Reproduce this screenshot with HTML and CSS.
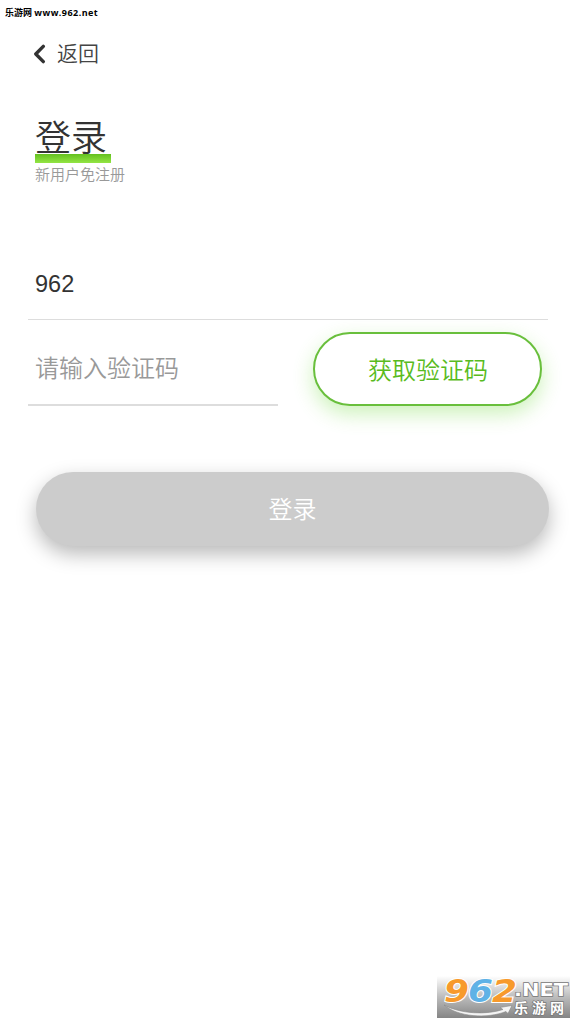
FILE: index.html
```html
<!DOCTYPE html>
<html lang="zh-CN">
<head>
<meta charset="utf-8">
<title>登录</title>
<link rel="stylesheet" href="styles.css">
</head>
<body>
<main class="page">
  <div class="site-mark">乐游网 <span class="site-url">www.962.net</span></div>
  <header class="nav">
    <svg class="nav-icon" viewBox="0 0 12 20"><path d="M9.3 2.4 1.8 10 9.3 17.6"/></svg>
    <span class="nav-label">返回</span>
  </header>
  <section class="heading">
    <h1 class="title">登录</h1>
    <div class="title-bar"></div>
    <p class="subtitle">新用户免注册</p>
  </section>
  <form class="form">
    <div class="phone">962</div>
    <div class="code-row">
      <div class="code">请输入验证码</div>
      <button class="get-code" type="button">获取验证码</button>
    </div>
    <button class="submit" type="button">登录</button>
  </form>
  <svg class="watermark" viewBox="0 0 133 42">
    <defs>
      <linearGradient id="fade" x1="0" y1="0" x2="0" y2="1">
        <stop offset="0" stop-color="#fff"/>
        <stop offset=".5" stop-color="#bcbcbc"/>
        <stop offset="1" stop-color="#858585"/>
      </linearGradient>
    </defs>
    <rect width="133" height="42" fill="url(#fade)"/>
    <g class="logo-num">
      <text x="7" y="25.5" textLength="25" lengthAdjust="spacingAndGlyphs" fill="#f79a2c">9</text>
      <text x="31" y="25.5" textLength="25" lengthAdjust="spacingAndGlyphs" fill="#5fb2e6">6</text>
      <text x="55" y="25.5" textLength="25" lengthAdjust="spacingAndGlyphs" fill="#f79a2c">2</text>
    </g>
    <path class="logo-smile" d="M7 29C23 38 50 39 66 33.5L63 31.5 75 29.5 71 37.5 69 35.5C50 43 21 41 7 29Z"/>
    <text class="logo-net" x="77" y="20" textLength="54" lengthAdjust="spacingAndGlyphs">.NET</text>
    <text class="logo-cn" x="77" y="37" textLength="50">乐游网</text>
  </svg>
</main>
</body>
</html>
```
FILE: styles.css
```css
* { box-sizing: border-box; }
body {
  margin: 0;
  background: #fff;
  font-family: "Liberation Sans", "Noto Sans CJK SC", sans-serif;
  color: #333;
}
.page {
  position: relative;
  height: 1024px;
  overflow: hidden;
}
.site-mark {
  height: 26px;
  padding-left: 5px;
  font: bold 9px/26px "Open Sans", "Noto Sans CJK SC", sans-serif;
  color: #000;
  white-space: nowrap;
}
.site-url { letter-spacing: .46px; }
.nav {
  display: flex;
  align-items: center;
  gap: 11px;
  height: 56px;
  padding-left: 34px;
}
.nav-icon {
  width: 12px;
  height: 20px;
  fill: none;
  stroke: #333;
  stroke-width: 3.4;
  stroke-linecap: round;
  stroke-linejoin: round;
}
.nav-label {
  padding-bottom: 4px;
  font: 350 21px/30px "Noto Sans CJK SC", sans-serif;
  color: #444;
}
.heading { padding: 32px 0 0 35px; }
.title {
  height: 40px;
  margin: 0;
  font: 350 36px/42px "Noto Sans CJK SC", sans-serif;
  color: #333;
}
.title-bar {
  position: relative;
  width: 76px;
  height: 9px;
  background: linear-gradient(#64c01f, #93e544);
}
.subtitle {
  height: 22px;
  margin: 0;
  font: 350 15px/21px "Noto Sans CJK SC", sans-serif;
  color: #999;
}
.form { padding: 64px 28px 0; }
.phone {
  height: 71px;
  padding-left: 7px;
  border-bottom: 1px solid #ddd;
  font-size: 23.5px;
  line-height: 70px;
}
.code-row {
  display: flex;
  justify-content: space-between;
  align-items: flex-end;
  height: 86px;
  padding-right: 6px;
}
.code {
  width: 250px;
  height: 74px;
  padding-left: 7px;
  border-bottom: 2px solid #ddd;
  font: 350 24px/70px "Noto Sans CJK SC", sans-serif;
  color: #999;
}
.get-code,
.submit {
  display: block;
  height: 74px;
  padding: 0;
  border-radius: 37px;
  font: 350 24px/72px "Noto Sans CJK SC", sans-serif;
}
.get-code {
  width: 229px;
  border: 2px solid #69bf3c;
  background: #fff;
  color: #58bb20;
  line-height: 70px;
  padding-left: 1px;
  box-shadow: 0 8px 20px rgba(100, 215, 45, .32);
}
.submit {
  width: 513px;
  margin: 66px 0 0 8px;
  padding-bottom: 2px;
  border: 0;
  background: #ccc;
  color: #fff;
  box-shadow: 0 8px 20px rgba(0, 0, 0, .28);
}
.watermark {
  position: absolute;
  left: 437px;
  top: 976px;
  width: 133px;
  height: 42px;
  overflow: visible;
}
.logo-num {
  font: italic bold 32px "DejaVu Sans", sans-serif;
  stroke: #fff;
  stroke-width: 2px;
  paint-order: stroke;
}
.logo-smile { fill: #f4f4f4; stroke: #888; stroke-width: .6px; }
.logo-net,
.logo-cn {
  fill: #fff;
  stroke: #777;
  stroke-width: 1.4px;
  paint-order: stroke;
}
.logo-net { font: bold 18px "DejaVu Sans", sans-serif; }
.logo-cn { font: bold 14px "Noto Sans CJK SC", sans-serif; }
```
